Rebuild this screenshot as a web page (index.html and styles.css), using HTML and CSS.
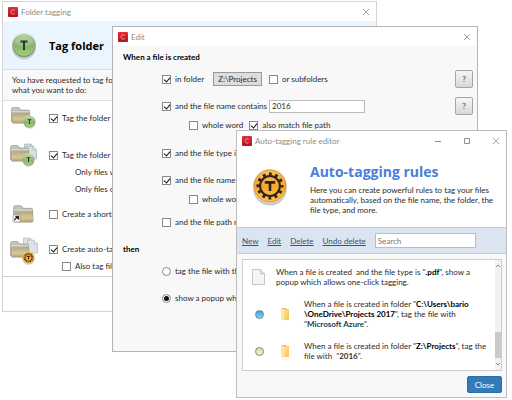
FILE: index.html
```html
<!DOCTYPE html>
<html lang="en">
<head>
<meta charset="utf-8">
<title>Auto-tagging rules</title>
<link rel="stylesheet" href="styles.css">
</head>
<body>
<svg class="defs" aria-hidden="true">
  <defs>
    <linearGradient id="green" x1="0" y1="0" x2="0" y2="1"><stop offset="0" stop-color="#a9c98f"/><stop offset=".45" stop-color="#7fae62"/><stop offset="1" stop-color="#a3d27c"/></linearGradient>
    <linearGradient id="rim" x1="0" y1="0" x2="0" y2="1"><stop offset="0" stop-color="#dfe8d8"/><stop offset="1" stop-color="#6f8a60"/></linearGradient>
    <linearGradient id="orange" x1="0" y1="0" x2="0" y2="1"><stop offset="0" stop-color="#fbc15c"/><stop offset=".5" stop-color="#f7a52d"/><stop offset="1" stop-color="#ffc552"/></linearGradient>
    <linearGradient id="back" x1="0" y1="0" x2="0" y2="1"><stop offset="0" stop-color="#c9cbc4"/><stop offset="1" stop-color="#a3a595"/></linearGradient>
    <linearGradient id="front" x1="0" y1="0" x2="0" y2="1"><stop offset="0" stop-color="#b9ad7c"/><stop offset=".6" stop-color="#d6c892"/><stop offset="1" stop-color="#aaa078"/></linearGradient>
    <linearGradient id="red" x1="0" y1="0" x2="0" y2="1"><stop offset="0" stop-color="#e2303c"/><stop offset="1" stop-color="#b3101c"/></linearGradient>
    <linearGradient id="yellow" x1="0" y1="0" x2="1" y2="1"><stop offset="0" stop-color="#ffe49a"/><stop offset="1" stop-color="#f4c451"/></linearGradient>
    <symbol id="app" viewBox="0 0 10 10"><rect width="10" height="10" rx="1" fill="url(#red)"/><path d="M6.7 3.5Q5.9 2.8 5 2.9C3.7 3 3.2 4 3.2 5s.6 2 1.8 2.1q1 .1 1.7-.6" fill="none" stroke="#f5a6ab" stroke-width=".9"/></symbol>
    <symbol id="cross" viewBox="0 0 8 8"><path d="M1 1l6 6M7 1L1 7" stroke="#8e8e8e" stroke-width=".8"/></symbol>
    <symbol id="tag" viewBox="0 0 26 28"><ellipse cx="13" cy="15" rx="12" ry="12.5" fill="#777" opacity=".35"/><circle cx="13" cy="13" r="12" fill="url(#rim)"/><circle cx="13" cy="13" r="10.8" fill="url(#green)"/><path d="M3.5 12a9.5 9 0 0 1 19 0Q13 16 3.5 12z" fill="#fff" opacity=".22"/><path d="M9.5 9.5h7M13 9.5v8.5" stroke="#2c3526" stroke-width="2" fill="none"/></symbol>
    <symbol id="gear" viewBox="0 0 36 38"><ellipse cx="18" cy="20.5" rx="17" ry="17" fill="#777" opacity=".4"/><circle cx="18" cy="18" r="17" fill="#e9dcc4"/><circle cx="18" cy="18" r="16" fill="url(#orange)" stroke="#c9862a" stroke-width=".7"/><circle cx="18" cy="18" r="12" fill="none" stroke="#2a241b" stroke-width="3" stroke-dasharray="2.8 3.483" stroke-dashoffset="1.4"/><circle cx="18" cy="18" r="9.9" fill="none" stroke="#2a241b" stroke-width="2"/><path d="M12.8 14.4h10.4M18 14.4v8.6" stroke="#2a241b" stroke-width="2.6" fill="none"/></symbol>
    <symbol id="folder" viewBox="0 0 20 17"><path d="M.6 14.5V2.2Q.6.6 2.2.6h5q1 0 1.5 1l.7 1.5h7.8q1.4 0 1.4 1.4v10z" fill="url(#back)" stroke="#94968d" stroke-width=".7"/><path d="M1.2 4.6h17" stroke="#e3e4df" stroke-width=".7"/><path d="M1.3 8Q2 6.5 4 6.7q6 .6 13-.2 1.6 0 1.8 1.3l.5 7.3Q19 16.3 17.6 16.3H2.6Q1.2 16.3 1.2 15z" fill="url(#front)" stroke="#a19a7b" stroke-width=".5"/></symbol>
    <symbol id="sheet" viewBox="0 0 13 16"><path d="M.5.5h7.8l4.2 4.2v10.8H.5z" fill="#f4f5f5" stroke="#b6babb" stroke-width=".8"/><path d="M8.3.5v4.2h4.2" fill="#dfe3e4" stroke="#b6babb" stroke-width=".8"/></symbol>
    <symbol id="graysheet" viewBox="0 0 13 16"><path d="M.5.5h7.8l4.2 4.2v10.8H.5z" fill="#d9dfe1" stroke="#a4acae" stroke-width=".9"/><path d="M8.3.5v4.2h4.2" fill="#eef1f2" stroke="#a4acae" stroke-width=".8"/></symbol>
    <symbol id="yfolder" viewBox="0 0 10 14"><path d="M1 1h5l.6 1H9v10.6H1z" fill="#f0bd4c"/><path d="M1 1l3 1.6V14L1 12.2z" fill="#ffe7a3"/><path d="M4 2.6h5V13H4z" fill="url(#yellow)"/></symbol>
  </defs>
</svg>

<main class="desktop">
  <section class="window window-folder" aria-label="Folder tagging">
    <header class="titlebar">
      <svg class="app-icon"><use href="#app"/></svg><span class="title">Folder tagging</span>
      <button class="win-btn" aria-label="Close Folder tagging"><svg><use href="#cross"/></svg></button>
    </header>
    <div class="hero"><svg class="hero-icon"><use href="#tag"/></svg><h1>Tag folder</h1></div>
    <p class="intro">You have requested to tag fol<br>what you want to do:</p>
    <div class="options">
      <div class="option">
        <svg class="opt-icon" viewBox="0 0 30 26"><use href="#folder" x="2" y="2" width="20" height="17"/><use href="#tag" x="14" y="10" width="13" height="14"/></svg>
        <div class="choices"><label class="check"><input type="checkbox" checked>Tag the folder</label></div>
      </div>
      <div class="option option-sub">
        <svg class="opt-icon" viewBox="0 0 30 26"><use href="#graysheet" x="15" y="1" width="11" height="15"/><use href="#graysheet" x="17" y="3" width="11" height="15"/><use href="#folder" x="1" y="3" width="20" height="17"/><use href="#tag" x="13" y="11" width="13" height="14"/></svg>
        <div class="choices"><label class="check"><input type="checkbox" checked>Tag the folder a</label><span class="note">Only files w</span><span class="note">Only files o</span></div>
      </div>
      <div class="option option-short">
        <svg class="opt-icon" viewBox="0 0 30 26"><use href="#folder" x="4" y="4" width="21" height="18"/><rect x="4" y="14" width="7" height="7" fill="#fff" stroke="#888" stroke-width=".6"/><path d="M5.6 19.6q0-3 2.6-3.2M6.6 15.4h3v3z" fill="#111" stroke="#111" stroke-width=".9"/></svg>
        <div class="choices"><label class="check"><input type="checkbox">Create a shortc</label></div>
      </div>
      <div class="option option-rules">
        <svg class="opt-icon opt-large" viewBox="0 0 30 30"><g opacity=".85"><use href="#graysheet" x="14" y="1" width="11" height="15"/><use href="#graysheet" x="18" y="3" width="11" height="15"/></g><use href="#folder" x="1" y="5" width="20" height="17"/><use href="#gear" x="13" y="15" width="13" height="14"/></svg>
        <div class="choices"><label class="check"><input type="checkbox" checked>Create auto-tag</label><label class="check nested"><input type="checkbox">Also tag file</label></div>
      </div>
    </div>
    <footer class="folder-foot"></footer>
  </section>

  <section class="window window-edit" aria-label="Edit">
    <header class="titlebar">
      <svg class="app-icon"><use href="#app"/></svg><span class="title">Edit</span>
      <button class="win-btn" aria-label="Close Edit"><svg><use href="#cross"/></svg></button>
    </header>
    <form class="edit-form">
      <h2>When a file is created</h2>
      <div class="row"><label class="check"><input type="checkbox" checked>in folder</label><button type="button" class="path">Z:\Projects</button><label class="check"><input type="checkbox">or subfolders</label><button type="button" class="help">?</button></div>
      <div class="row"><label class="check"><input type="checkbox" checked>and the file name contains</label><input class="text name-text" type="text" value="2016" aria-label="File name contains"><button type="button" class="help">?</button></div>
      <div class="subrow"><label class="check"><input type="checkbox">whole word</label><label class="check"><input type="checkbox" checked>also match file path</label></div>
      <div class="row row-group"><label class="check"><input type="checkbox" checked>and the file type is</label></div>
      <div class="row"><label class="check"><input type="checkbox" checked>and the file name</label></div>
      <div class="subrow"><label class="check"><input type="checkbox">whole word</label></div>
      <div class="row"><label class="check"><input type="checkbox">and the file path m</label></div>
      <h2 class="then">then</h2>
      <div class="row"><label class="check"><input type="radio" name="action">tag the file with th</label></div>
      <div class="row"><label class="check"><input type="radio" name="action" checked>show a popup whic</label></div>
    </form>
  </section>

  <section class="window window-rules" aria-label="Auto-tagging rule editor">
    <header class="titlebar">
      <svg class="app-icon"><use href="#app"/></svg><span class="title">Auto-tagging rule editor</span>
      <button class="win-btn" aria-label="Minimize"><svg viewBox="0 0 8 8"><path d="M1 4.5h6" stroke="#8e8e8e"/></svg></button>
      <button class="win-btn" aria-label="Maximize"><svg viewBox="0 0 8 8"><path d="M1.5 1.5h5v5h-5z" fill="none" stroke="#8e8e8e"/></svg></button>
      <button class="win-btn" aria-label="Close rule editor"><svg><use href="#cross"/></svg></button>
    </header>
    <div class="rules-head">
      <svg class="gear-icon"><use href="#gear"/></svg>
      <div><h1>Auto-tagging rules</h1><p>Here you can create powerful rules to tag your files<br>automatically, based on the file name, the folder, the<br>file type, and more.</p></div>
    </div>
    <nav class="toolbar"><a href="#new">New</a><a href="#edit">Edit</a><a href="#delete">Delete</a><a href="#undo">Undo delete</a><input class="text search" type="search" placeholder="Search" aria-label="Search"></nav>
    <div class="rules-body">
      <div class="list">
        <ul>
          <li><svg class="sheet-icon"><use href="#sheet"/></svg><p>When a file is created &nbsp;and the file type is "<b>.pdf</b>", show a<br>popup which allows one-click tagging.</p></li>
          <li><i class="dot blue"></i><svg class="yfolder-icon"><use href="#yfolder"/></svg><p>When a file is created in folder "<b>C:\Users\bario<br>\OneDrive\Projects 2017</b>", tag the file with<br>"<b class="azure">Microsoft Azure</b>".</p></li>
          <li><i class="dot lime"></i><svg class="yfolder-icon"><use href="#yfolder"/></svg><p>When a file is created in folder "<b>Z:\Projects</b>", tag the<br>file with &nbsp;"<b class="year">2016</b>".</p></li>
        </ul>
        <div class="scroll"><svg viewBox="0 0 6 4"><path d="M1 3l2-2 2 2" fill="none" stroke="#888"/></svg><span class="thumb"></span><svg viewBox="0 0 6 4"><path d="M1 1l2 2 2-2" fill="none" stroke="#888"/></svg></div>
      </div>
      <button class="close">Close</button>
    </div>
  </section>
</main>
</body>
</html>
```

FILE: styles.css
```css
* { box-sizing: border-box; }
body { margin: 0; background: #fff; color: #2a2a2a; font: 8px/10px Lato, "Open Sans", sans-serif; }
h1, h2, p, ul { margin: 0; padding: 0; }
button, input { font: inherit; color: inherit; margin: 0; }
.defs { position: absolute; width: 0; height: 0; }
.desktop { position: relative; min-height: 100vh; overflow: hidden; }

.window { position: absolute; overflow: hidden; white-space: nowrap; background: #fff; border: 1px solid #c4c4c4; }
.window-folder { left: 2px; top: 1px; right: 135px; border-color: #d4d4d4; }
.window-edit { left: 112px; top: 26px; right: 34px; background: #f8f8f8; border-color: #b4b4b4; }
.window-rules { left: 236px; top: 130px; right: 5px; border-color: #bdbdbd; }

.titlebar { display: flex; align-items: center; height: 19px; padding: 0 6px 0 5px; background: #fff; color: #8c8c8c; }
.app-icon { width: 10px; height: 10px; margin-right: 3px; }
.title { flex: 1; }
.win-btn { display: flex; padding: 0; border: 0; background: none; }
.win-btn + .win-btn { margin-left: 21px; }
.win-btn svg { width: 8px; height: 8px; }

.hero { display: flex; align-items: center; gap: 12px; height: 49px; padding: 1px 8px 0; background: #ebf5fe; border-bottom: 1px solid #d9dde0; }
.hero-icon { width: 26px; height: 28px; }
h1 { font: bold 11px/16px "Open Sans", sans-serif; color: #000; }
.intro { padding: 5px 9px; background: #f8f8f8; border-bottom: 1px solid #dcdcdc; }
.option { display: flex; gap: 10px; padding: 4px 6px; }
.opt-icon { flex: none; width: 30px; height: 26px; }
.opt-large { height: 30px; }
.choices { display: flex; flex-direction: column; gap: 7px; padding-top: 8px; }
.option-sub { height: 59px; margin-top: 3px; }
.option-short { padding-bottom: 5px; }
.option-rules { padding-bottom: 5px; }
.note { padding-left: 26px; }
.nested { padding-left: 13px; }
.folder-foot { height: 35px; border-top: 1px solid #cfcfcf; }

.check { display: flex; align-items: center; gap: 4px; }
.check input { appearance: none; display: grid; place-items: center; width: 9px; height: 9px; background: #fff; border: 1px solid #8a8a8a; }
.check [type="checkbox"]:checked::before { content: ""; width: 3px; height: 5px; margin-top: -1px; border: solid #111; border-width: 0 1px 1px 0; transform: rotate(40deg); }
.check [type="radio"] { border-radius: 50%; }
.check [type="radio"]:checked::before { content: ""; width: 5px; height: 5px; border-radius: 50%; background: #111; }

.edit-form { padding: 5px 4px 44px 10px; }
h2 { font: bold 8px/12px Lato, sans-serif; color: #000; }
.row { display: flex; align-items: center; height: 18px; margin-top: 9px; padding-left: 39px; }
h2 + .row { margin-top: 7px; }
.subrow { display: flex; gap: 6px; margin-top: 5px; padding-left: 66px; }
.row-group { margin-top: 14px; }
.then { margin-top: 12px; }
.path { height: 14px; margin: 0 11px 0 9px; padding: 0 4px; line-height: 10px; background: #ddd; border: 1px solid #999; }
.path + .check { margin-left: -4px; }
.help { width: 18px; height: 18px; margin-left: auto; padding: 0; font-weight: bold; color: #666; background: linear-gradient(#f6f6f6, #d8d8d8); border: 1px solid #a5a5a5; border-radius: 2px; }
.text { height: 13px; padding: 0 2px; background: #fff; border: 1px solid #bcbcbc; border-radius: 0; outline: 0; }
.name-text { width: 96px; margin-left: 2px; }

.rules-head { display: flex; align-items: flex-start; gap: 22px; height: 77px; padding: 12px 15px; }
.rules-head h1 { font-size: 14px; line-height: 20px; color: #4a7edb; }
.rules-head p { margin-top: 3px; }
.gear-icon { flex: none; width: 36px; height: 38px; margin-top: 6px; }
.toolbar { display: flex; align-items: center; gap: 9px; height: 27px; padding: 0 5px; background: #dbe4f1; border: solid #c3cddb; border-width: 1px 0; }
.toolbar a { color: #2d5878; text-decoration: underline; }
.search { appearance: none; width: 101px; height: 15px; }
.search::placeholder { color: #777; opacity: 1; }
.rules-body { display: flex; flex-direction: column; gap: 5px; padding: 5px 4px 4px 5px; background: #f8f8f8; }
.list { display: flex; background: #fff; border: 1px solid #cdcdcd; }
.list ul { flex: 1; list-style: none; padding: 7px 9px 9px; display: flex; flex-direction: column; gap: 12px; }
.list li { display: flex; align-items: center; }
.sheet-icon { width: 13px; height: 16px; margin-right: 11px; }
.dot { width: 9px; height: 9px; margin: 0 16px 0 3px; border: 1px solid #78868a; border-radius: 50%; }
.blue { background: linear-gradient(#2fa8da, #6fdcff); }
.lime { background: linear-gradient(#d3dda8, #eef5c8); }
.yfolder-icon { width: 10px; height: 14px; margin-right: 14px; }
b { color: #000; }
.azure { color: #123f55; }
.year { color: #333; }
.scroll { display: flex; flex-direction: column; align-items: center; justify-content: space-between; width: 11px; padding: 4px 0; background: #f1f1f1; }
.scroll svg { width: 6px; height: 4px; }
.thumb { align-self: stretch; height: 26px; margin: auto 0 4px; background: #c9c9c9; }
.close { align-self: flex-end; width: 35px; height: 17px; padding: 0; color: #fff; background: #337ab7; border: 1px solid #2e6da4; border-radius: 2px; }
```
